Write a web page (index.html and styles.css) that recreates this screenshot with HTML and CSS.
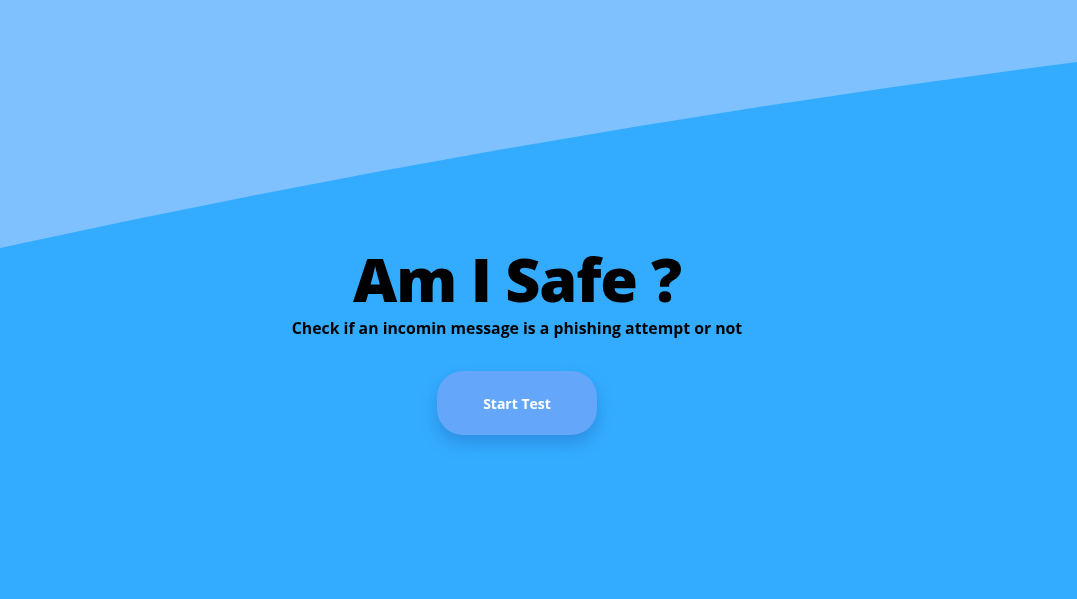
FILE: index.html
```html
<!DOCTYPE html>
<html lang="en">
<head>
<meta charset="utf-8">
<title>Am I Safe ?</title>
<link rel="stylesheet" href="styles.css">
</head>
<body>
<div class="bg">
  <svg class="wave" viewBox="0 0 1077 599" preserveAspectRatio="none" aria-hidden="true">
    <path d="M0 0 H1077 V62 Q538 131 0 248 Z" fill="#7fc1ff"/>
  </svg>
</div>
<main class="hero">
  <h1 class="title">Am I Safe ?</h1>
  <p class="subtitle">Check if an incomin message is a phishing attempt or not</p>
  <button class="start">Start Test</button>
</main>
</body>
</html>
```

FILE: styles.css
```css
html, body {
  margin: 0;
  height: 100%;
}
body {
  background: #33acff;
  font-family: "Open Sans", "Noto Sans", sans-serif;
  overflow: hidden;
}
.bg {
  position: fixed;
  inset: 0;
  z-index: 0;
}
.wave {
  width: 100%;
  height: 100%;
  display: block;
}
.hero {
  position: relative;
  z-index: 1;
  display: flex;
  flex-direction: column;
  align-items: center;
  padding-top: 243px;
  padding-right: 43px;
}
.title {
  margin: 0;
  font-size: 61px;
  font-weight: 800;
  line-height: 72px;
  color: #000;
  letter-spacing: -1.2px;
}
.subtitle {
  margin: 3px 0 0;
  font-size: 15.8px;
  font-weight: 700;
  line-height: 20px;
  color: #000;
}
.start {
  margin-top: 33px;
  width: 160px;
  height: 64px;
  border: none;
  border-radius: 26px;
  background: #63a6fa;
  color: #fff;
  font-family: inherit;
  font-size: 14px;
  font-weight: 700;
  box-shadow: 0 8px 16px rgba(30, 90, 170, 0.35);
  cursor: pointer;
}
```
